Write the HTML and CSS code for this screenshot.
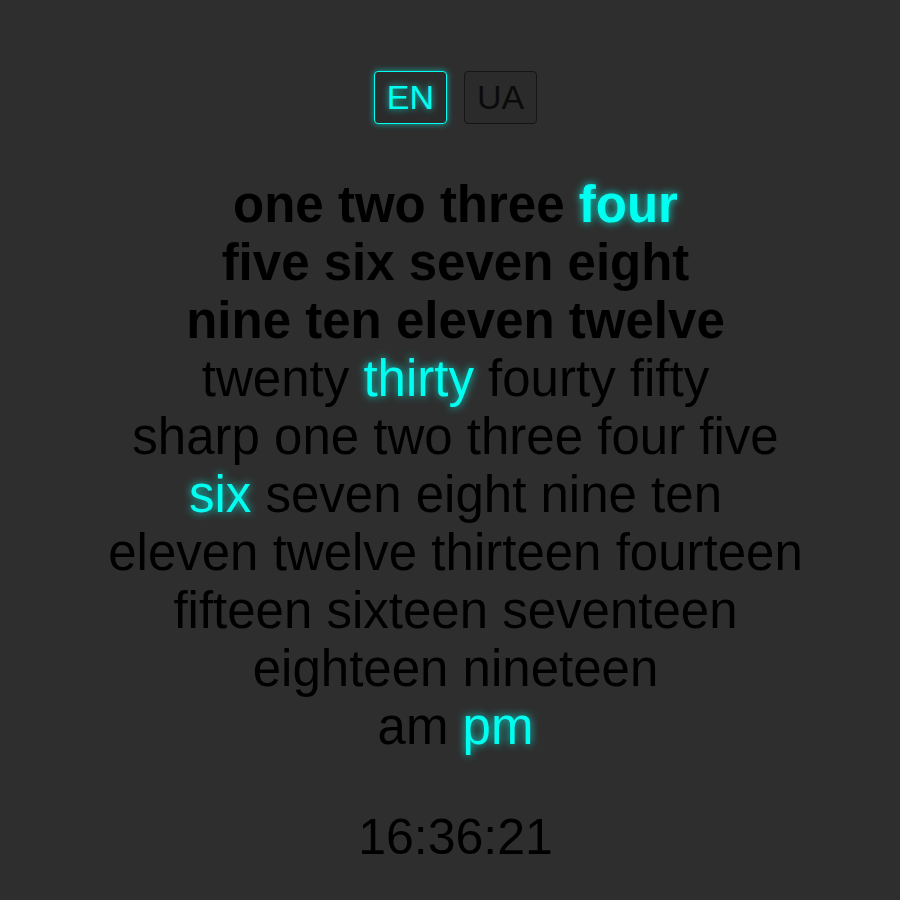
FILE: index.html
```html
<!DOCTYPE html>
<html lang="en">
<head>
<meta charset="utf-8">
<title>Word Clock</title>
<link rel="stylesheet" href="styles.css">
</head>
<body>
<main class="app">
  <div class="langs">
    <button class="lang active">EN</button>
    <button class="lang">UA</button>
  </div>
  <div class="clock">
    <div class="row bold">one two three <span class="on">four</span></div>
    <div class="row bold">five six seven eight</div>
    <div class="row bold">nine ten eleven twelve</div>
    <div class="row">twenty <span class="on">thirty</span> fourty fifty</div>
    <div class="row">sharp one two three four five</div>
    <div class="row"><span class="on">six</span> seven eight nine ten</div>
    <div class="row">eleven twelve thirteen fourteen</div>
    <div class="row">fifteen sixteen seventeen</div>
    <div class="row">eighteen nineteen</div>
    <div class="row">am <span class="on">pm</span></div>
  </div>
  <div class="time">16:36:21</div>
</main>
</body>
</html>
```
FILE: styles.css
```css
html, body {
  margin: 0;
  padding: 0;
  background: #2e2e2e;
  height: 100%;
}
body {
  font-family: "Liberation Sans", Arial, sans-serif;
  color: #000;
}
.app {
  display: flex;
  flex-direction: column;
  align-items: center;
  padding-top: 71px;
  padding-left: 11px;
}
.langs {
  display: flex;
  gap: 17px;
}
.lang {
  font-family: "Liberation Sans", Arial, sans-serif;
  font-size: 34px;
  line-height: 37px;
  padding: 7px 12px;
  background: #2b2b2b;
  color: #0b0b0b;
  border: 1px solid #151515;
  border-radius: 4px;
}
.lang.active {
  color: #00fff0;
  border-color: #00fff0;
  text-shadow: 0 0 7px rgba(0, 255, 240, 0.8);
  box-shadow: 0 0 6px rgba(0, 255, 240, 0.6);
}
.clock {
  margin-top: 52px;
  text-align: center;
  font-size: 51px;
  line-height: 58px;
}
.row.bold {
  font-weight: bold;
}
.on {
  color: #00fff0;
  text-shadow: 0 0 8px rgba(0, 255, 240, 0.85);
}
.time {
  margin-top: 52px;
  font-size: 50px;
  line-height: 58px;
}
```
